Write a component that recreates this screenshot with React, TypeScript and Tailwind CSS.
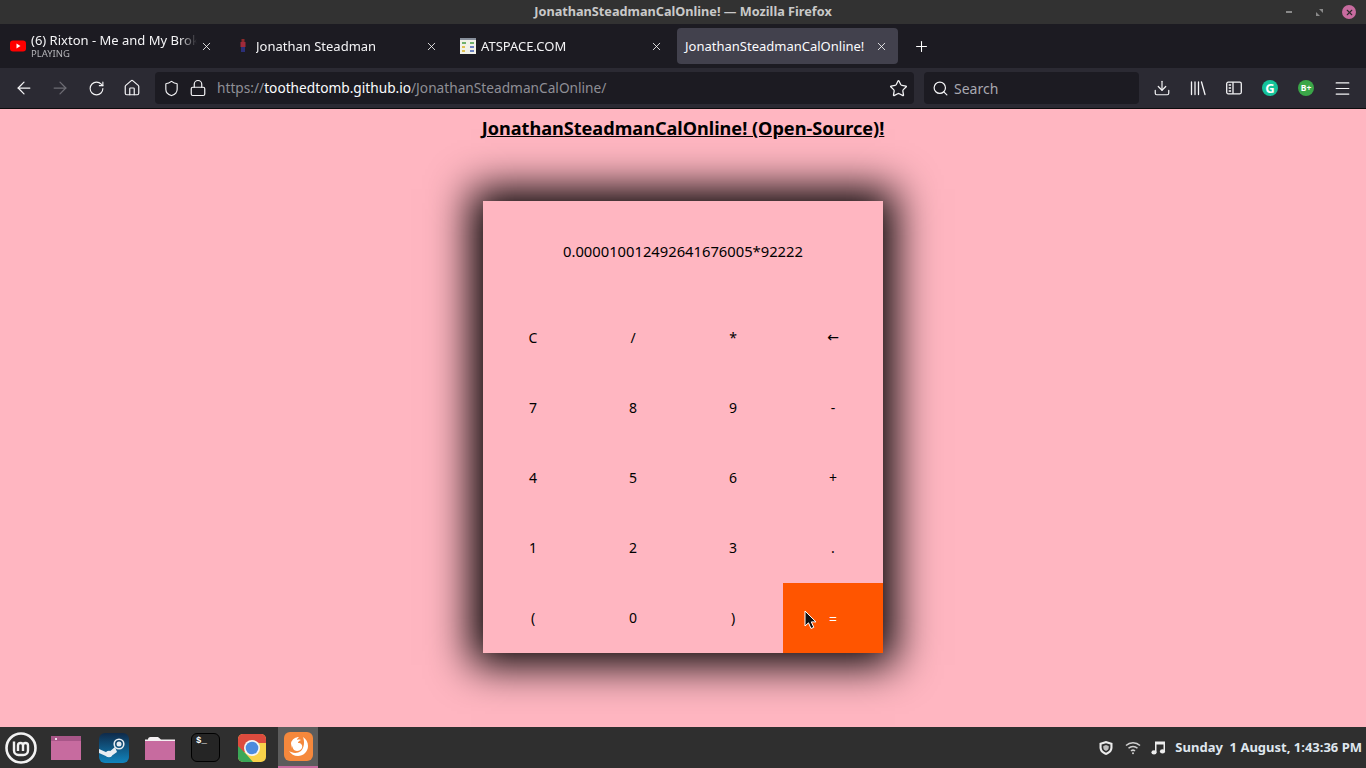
import React from 'react';
import { ArrowLeft, ArrowRight, RotateCw, Home, Shield, Lock, Star, Search, Download, Menu, Plus, X } from 'lucide-react';

const KEYS = ['C', '/', '*', '←', '7', '8', '9', '-', '4', '5', '6', '+', '1', '2', '3', '.', '(', '0', ')', '='];

function Tab({ icon, title, sub }: { icon: React.ReactNode; title: string; sub?: string }) {
  return (
    <div className="flex h-[40px] w-[225px] shrink-0 items-center pl-[8px] pr-[14px]">
      <div className="flex w-[16px] shrink-0 justify-center">{icon}</div>
      <div className="ml-[5px] min-w-0 flex-1 overflow-hidden [mask-image:linear-gradient(to_left,transparent,black_18px)]">
        <div className={`whitespace-nowrap text-[13px] text-[#f4f4f6] ${sub ? 'leading-[15px]' : 'leading-[16px]'}`}>{title}</div>
        {sub && <div className="mb-[1px] text-[9.5px] leading-[11px] text-[#b4b4b8]">{sub}</div>}
      </div>
      <X size={13} strokeWidth={1.5} className="ml-[3px] shrink-0 text-white" />
    </div>
  );
}

function NavIcon({ children }: { children: React.ReactNode }) {
  return <div className="flex h-[36px] w-[36px] shrink-0 items-center justify-center">{children}</div>;
}

function YoutubeIcon() {
  return (
    <svg width="16" height="12" viewBox="0 0 16 12">
      <rect width="16" height="11" y="0.5" rx="3" fill="#ff0000" />
      <path d="M6.5 3.5v5L10.5 6z" fill="#fff" />
    </svg>
  );
}

function SpriteIcon() {
  return (
    <svg width="8" height="14" viewBox="0 0 8 14">
      <rect x="2.5" y="0" width="3" height="3" fill="#8c2a2a" />
      <rect x="1.5" y="3" width="5" height="5" fill="#a02a3a" />
      <rect x="2" y="8" width="4" height="5" fill="#2b2f78" />
    </svg>
  );
}

function AtspaceIcon() {
  return (
    <svg width="16" height="16" viewBox="0 0 16 16">
      <rect width="16" height="16" fill="#f1f1e8" />
      <rect y="0" width="16" height="2" fill="#88909c" />
      <rect x="2" y="4" width="4" height="2" fill="#6fb06a" />
      <rect x="10" y="4" width="4" height="2" fill="#6fb06a" />
      <rect x="2" y="8" width="3" height="2" fill="#e0c050" />
      <rect x="10" y="8" width="4" height="2" fill="#6a80c0" />
      <rect x="2" y="12" width="3" height="2" fill="#e0c050" />
      <rect x="10" y="12" width="4" height="2" fill="#6a80c0" />
    </svg>
  );
}

function LibraryIcon() {
  return (
    <svg width="16" height="16" viewBox="0 0 16 16" fill="none" stroke="#f4f4f6" strokeWidth="1.3" strokeLinecap="round">
      <path d="M1.5 2v12.5M5 2v12.5M8.5 2v12.5M11.5 2l3.5 12.5" />
    </svg>
  );
}

function SidebarIcon() {
  return (
    <svg width="16" height="14" viewBox="0 0 16 14" fill="none" stroke="#f4f4f6" strokeWidth="1.3">
      <rect x="0.7" y="1.2" width="14.6" height="11.6" rx="1.5" />
      <path d="M7 1.2v11.6M2.7 4h2.4M2.7 7h2.4M2.7 10h2.4" />
    </svg>
  );
}

function MintLogo() {
  return (
    <svg width="32" height="32" viewBox="0 0 32 32" fill="none" stroke="#f2f2f2">
      <circle cx="16" cy="16" r="14.5" strokeWidth="2.6" />
      <path d="M9 9.5v9a4.5 4.5 0 0 0 4.5 4.5h5a4.5 4.5 0 0 0 4.5-4.5v-5a2.5 2.5 0 0 0-5 0V19m0-5.5a2.5 2.5 0 0 0-5 0V19" strokeWidth="2.4" />
    </svg>
  );
}

function WindowFolder() {
  return (
    <svg width="30" height="24" viewBox="0 0 30 24">
      <rect width="30" height="24" fill="#c76b9f" />
      <rect width="30" height="5" fill="#a85688" />
      <rect x="4" y="2" width="2" height="2" fill="#f0e0ea" />
    </svg>
  );
}

function SteamIcon() {
  return (
    <svg width="30" height="30" viewBox="0 0 30 30">
      <defs>
        <linearGradient id="steam" x1="0" y1="0" x2="0" y2="1">
          <stop offset="0" stopColor="#0f2a4a" />
          <stop offset="1" stopColor="#1184bd" />
        </linearGradient>
      </defs>
      <rect width="30" height="30" rx="6" fill="url(#steam)" />
      <circle cx="20" cy="11" r="4.8" fill="none" stroke="#e8edf2" strokeWidth="1.6" />
      <circle cx="20" cy="11" r="2.5" fill="#e8edf2" />
      <path d="M0 16l9 4 7-6 2 5-7 5-2 0-9-4z" fill="#e8edf2" />
      <circle cx="10" cy="21" r="3.2" fill="#e8edf2" />
    </svg>
  );
}

function PlainFolder() {
  return (
    <svg width="30" height="24" viewBox="0 0 30 24">
      <path d="M3 3.5Q3 1 5.5 1H13l3 2.5h14V24H0V3.5z" fill="#f4f0f2" />
      <path d="M0 5h30v19H0z" fill="#c76b9f" />
    </svg>
  );
}

function TerminalIcon() {
  return (
    <div className="h-[29px] w-[29px] rounded-[6px] border border-black bg-[#252525] pl-[4px] pt-[2px] font-['Liberation_Mono',monospace] text-[9px] font-bold leading-[11px] text-white">
      $_
    </div>
  );
}

function ChromeIcon() {
  return (
    <svg width="28" height="28" viewBox="0 0 28 28">
      <rect width="28" height="28" rx="5" fill="#f8d24a" />
      <path d="M0 5a5 5 0 0 1 5-5h18a5 5 0 0 1 5 5v4H14L5 20 0 14z" fill="#dd4b3e" />
      <path d="M0 12l8 8 7 8H5a5 5 0 0 1-5-5z" fill="#3aa757" />
      <circle cx="14" cy="14" r="8" fill="#f4f4f4" />
      <circle cx="14" cy="14" r="6.3" fill="#4c8bdd" />
    </svg>
  );
}

function FirefoxIcon() {
  return (
    <svg width="29" height="29" viewBox="0 0 29 29">
      <rect width="29" height="29" rx="6" fill="#f5883c" />
      <path d="M7 11c1-4 5-6 8-6-1 1-2 2-2 3 2-1 4 0 4 0s-3 1-3 3c3 0 5 2 4 5-1 2-3 3-5 3-3 0-5-3-4-5-1 1-1 2-1 3 0-2-1-4-1-6z" fill="#fff" />
      <path d="M19 5c3 2 5 5 5 9 0 6-5 10-10 10-4 0-7-2-9-5 3 2 8 3 12 0 3-3 4-9 2-14z" fill="#fff" />
    </svg>
  );
}

function Cursor() {
  return (
    <svg width="14" height="20" viewBox="0 0 14 20" className="absolute left-[21px] top-[27px]">
      <path d="M1 1v15l3.5-3.2 2.5 5.7 2.8-1.2-2.5-5.4H12z" fill="#111" stroke="#fff" strokeWidth="1" />
    </svg>
  );
}

function TrayShield() {
  return (
    <svg width="16" height="16" viewBox="0 0 16 16">
      <path d="M8 1l6.5 2v4.5c0 3.800-2.800 6.300-6.500 7.500-3.700-1.200-6.500-3.700-6.500-7.500V3z" fill="#ececec" />
      <path d="M8 3.200l4.400 1.400v3c0 2.500-1.900 4.200-4.400 5.200-2.500-1-4.400-2.700-4.400-5.200v-3z" fill="#2f2f2f" />
      <path d="M8 5l2.700.9v1.800c0 1.500-1.100 2.500-2.700 3.200-1.600-.7-2.700-1.700-2.700-3.200V5.900z" fill="#bdbdbd" />
    </svg>
  );
}

function TrayNote() {
  return (
    <svg width="15" height="15" viewBox="0 0 15 15" fill="#ededed">
      <path d="M4 1.5h10v10h-1.500V4.500h-7v8H4z" />
      <ellipse cx="3" cy="12.4" rx="2.6" ry="2.1" />
      <ellipse cx="11.5" cy="11.4" rx="2.6" ry="2.1" />
    </svg>
  );
}

export default function App() {
  return (
    <div className="flex h-[768px] w-[1366px] flex-col overflow-hidden bg-[#ffb6c1] font-['Noto_Sans',sans-serif]">
      {/* window title */}
      <div className="relative flex h-[24px] shrink-0 items-center justify-center bg-[#323232] text-[12.7px] font-bold text-[#c9c9c9]">
        JonathanSteadmanCalOnline! — Mozilla Firefox
        <div className="absolute left-[1286px] top-[11px] h-[2px] w-[6px] bg-[#8a8a8a]" />
        <svg width="7" height="7" viewBox="0 0 7 7" className="absolute left-[1316px] top-[9px]">
          <path d="M0 7V3l4 4zM7 0v4L3 0z" fill="#8a8a8a" />
        </svg>
        <div className="absolute left-[1342px] top-[5px] flex h-[14px] w-[14px] items-center justify-center rounded-full bg-[#c76b9f]">
          <X size={9} strokeWidth={3} className="text-[#2b2b2b]" />
        </div>
      </div>

      {/* tabs */}
      <div className="flex h-[44px] shrink-0 items-center bg-[#1c1b22] pl-[2px]">
        <Tab icon={<YoutubeIcon />} title="(6) Rixton - Me and My Broken Heart" sub="PLAYING" />
        <Tab icon={<SpriteIcon />} title="Jonathan Steadman" />
        <Tab icon={<AtspaceIcon />} title="ATSPACE.COM" />
        <div className="flex h-[36px] w-[221px] shrink-0 items-center rounded-[4px] bg-[#42414d] pl-[8px] pr-[10px]">
          <span className="flex-1 whitespace-nowrap pt-[1px] text-[13px] text-[#fbfbfe]">JonathanSteadmanCalOnline!</span>
          <X size={13} strokeWidth={1.5} className="text-white" />
        </div>
        <Plus size={17} strokeWidth={1.5} className="ml-[15px] text-white" />
      </div>

      {/* nav bar */}
      <div className="flex h-[40px] shrink-0 items-center bg-[#2b2a33] pl-[6px] text-[#f4f4f6]">
        <NavIcon><ArrowLeft size={20} strokeWidth={1.5} /></NavIcon>
        <NavIcon><ArrowRight size={20} strokeWidth={1.5} className="text-[#6d6c74]" /></NavIcon>
        <NavIcon><RotateCw size={17} strokeWidth={1.6} /></NavIcon>
        <NavIcon><Home size={18} strokeWidth={1.6} /></NavIcon>
        <div className="ml-[5px] flex h-[32px] w-[759px] items-center rounded-[4px] bg-[#1c1b22] pl-[8px] pr-[6px]">
          <Shield size={17} strokeWidth={1.6} />
          <Lock size={18} strokeWidth={1.6} className="ml-[9px]" />
          <div className="ml-[10px] flex-1 whitespace-nowrap pt-[1px] text-[13.7px] text-[#8f8f96]">
            https://<span className="text-[#fbfbfe]">toothedtomb.github.io</span>/JonathanSteadmanCalOnline/
          </div>
          <Star size={19} strokeWidth={1.6} />
        </div>
        <div className="ml-[10px] flex h-[32px] w-[215px] items-center rounded-[4px] bg-[#1c1b22] pl-[8px] text-[14px] text-[#a8a8b0]">
          <Search size={17} strokeWidth={1.7} className="text-[#f4f4f6]" />
          <span className="ml-[5px]">Search</span>
        </div>
        <div className="ml-[5px] flex">
          <NavIcon><Download size={18} strokeWidth={1.6} /></NavIcon>
          <NavIcon><LibraryIcon /></NavIcon>
          <NavIcon><SidebarIcon /></NavIcon>
          <NavIcon>
            <div className="flex h-[16px] w-[16px] items-center justify-center rounded-full bg-[#15c39a] text-[13px] font-bold leading-none text-white">G</div>
          </NavIcon>
          <NavIcon>
            <div className="flex h-[16px] w-[16px] items-center justify-center rounded-full bg-[#3aa648] text-[8.5px] font-bold leading-none text-white">B+</div>
          </NavIcon>
          <NavIcon><Menu size={19} strokeWidth={1.5} /></NavIcon>
        </div>
      </div>
      <div className="h-px shrink-0 bg-[#0c0c0d]" />

      {/* page */}
      <div className="flex min-h-0 flex-1 flex-col items-center">
        <h1 className="mt-[7px] text-[18.1px] font-bold leading-[24px] text-black underline">
          JonathanSteadmanCalOnline! (Open-Source)!
        </h1>
        <div className="mt-[61px] w-[400px] bg-[#ffb6c1] text-[14px] text-black shadow-[0_0_40px_12px_#000]">
          <div className="flex h-[102px] items-center justify-center pb-[2px] text-[14.75px]">0.000010012492641676005*92222</div>
          <div className="grid grid-cols-4">
            {KEYS.map((k) => (
              <div
                key={k}
                className={`relative flex h-[70px] items-center justify-center ${k === '=' ? 'bg-[#ff5500] text-white' : 'pb-[2px]'} ${k === '←' ? "font-['DejaVu_Sans',sans-serif] text-[14px]" : ''}`}
              >
                {k}
                {k === '=' && <Cursor />}
              </div>
            ))}
          </div>
        </div>
      </div>

      {/* taskbar */}
      <div className="flex h-[41px] shrink-0 items-center bg-[#2f2f2f]">
        <div className="ml-[5px] flex"><MintLogo /></div>
        <div className="ml-[14px] flex"><WindowFolder /></div>
        <div className="ml-[18px] flex"><SteamIcon /></div>
        <div className="ml-[16px] flex"><PlainFolder /></div>
        <div className="ml-[16px] flex"><TerminalIcon /></div>
        <div className="ml-[18px] flex"><ChromeIcon /></div>
        <div className="ml-[12px] flex h-[41px] w-[40px] items-center justify-center border-b-2 border-[#c76b9f] bg-[#5c5c5c]"><FirefoxIcon /></div>
        <div className="ml-auto flex items-center pr-[4px] text-[#e6e6e6]">
          <TrayShield />
          <svg width="16" height="14" viewBox="0 0 16 14" fill="none" stroke="#cfcfcf" strokeWidth="1.5" className="ml-[11px]">
            <path d="M1 4.5a10 10 0 0 1 14 0M3.5 7.2a6.5 6.5 0 0 1 9 0M6 10a3 3 0 0 1 4 0" />
            <circle cx="8" cy="12.3" r="1" fill="#cfcfcf" stroke="none" />
          </svg>
          <div className="ml-[10px] flex"><TrayNote /></div>
          <span className="ml-[9px] whitespace-pre text-[13px] font-bold text-[#dfe6ee]">Sunday  1 August, 1:43:36 PM</span>
        </div>
      </div>
    </div>
  );
}
